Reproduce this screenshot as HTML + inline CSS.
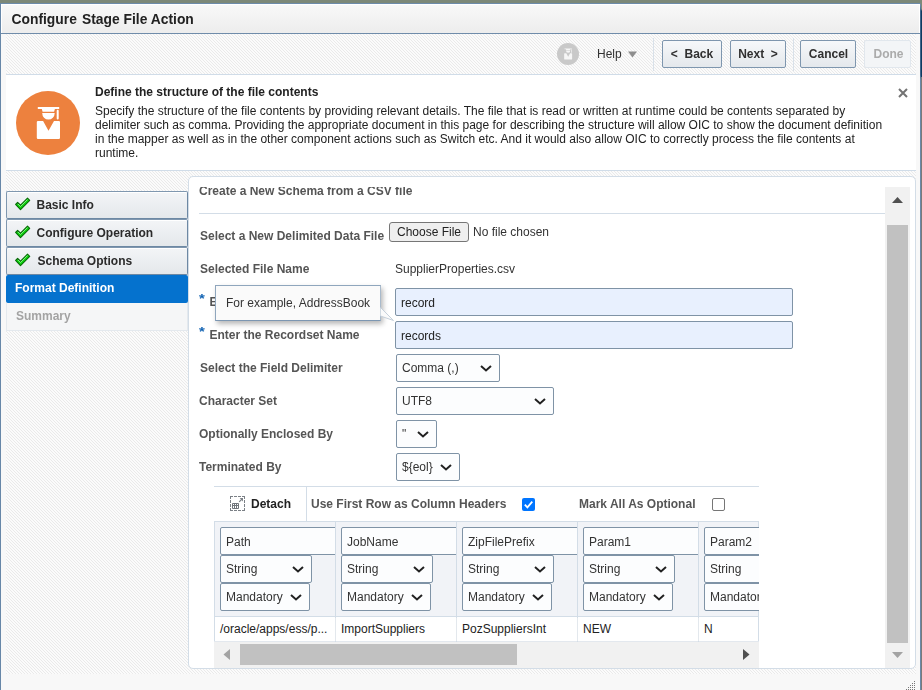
<!DOCTYPE html>
<html><head><meta charset="utf-8"><title>Configure Stage File Action</title>
<style>
*{box-sizing:border-box;margin:0;padding:0}
html,body{width:922px;height:690px;overflow:hidden;background:#f8f8f8;font-family:"Liberation Sans",Arial,sans-serif;font-size:12px;color:#333}
.abs{position:absolute}
#root{will-change:transform;position:absolute;left:0;top:0;width:922px;height:690px;overflow:hidden;background:#f8f8f8}
#topband{left:0;top:0;width:922px;height:3px;background:#7c8878}
#rightdark{left:921px;top:0;width:1px;height:77px;background:linear-gradient(#7c8878 0,#7c8878 9px,#0f3b60 11px,#0f3b60 100%)}
#rightgray{left:921px;top:77px;width:1px;height:613px;background:#7a7a7a}
#rightb{left:920px;top:3px;width:1px;height:687px;background:linear-gradient(#7c8878 0,#6a89aa 2px,#41668b 8px,#41668b 72px,#6a89aa 76px,#6a89aa 100%)}
#leftb{left:0;top:3px;width:1px;height:687px;background:#6787a8}
#topb{left:0;top:3px;width:921px;height:1px;background:#6c8baa}
#titlebar{left:1px;top:4px;width:919px;height:29px;background:linear-gradient(#f8f8f8,#ededed);border-top:1px solid #fff;border-left:1px solid #fff;border-right:1px solid #fff}
#titlebar span{position:absolute;left:9.5px;top:6px;font-size:13.850px;font-weight:bold;color:#222;white-space:nowrap;line-height:16px}
#titleline{left:1px;top:33px;width:919px;height:1px;background:#6f8caa}
#hatch{left:6px;top:34px;width:910px;height:640px}
.lbl{position:absolute;font-weight:bold;color:#555;white-space:nowrap;line-height:14px}
.txt{position:absolute;white-space:nowrap;line-height:14px;color:#333}
.btn{position:absolute;top:40px;height:28px;border:1px solid #7e96ae;border-radius:2px;background:linear-gradient(#f6f8fa,#e4e8ec);font-weight:bold;font-size:12px;color:#303030;text-align:center;line-height:26px;white-space:nowrap}
.nav{position:absolute;left:6px;width:182px;height:28px;border:1px solid #7f97af;border-right-color:#6d88a3;border-bottom-color:#6d88a3;border-radius:2px;background:linear-gradient(#f3f5f7,#e4e8eb);box-shadow:inset 0 1px 0 #fff;line-height:25px;white-space:nowrap;color:#222}
.sel{position:absolute;height:28px;border:1px solid #7f93a6;border-radius:2px;background:#fcfdfe;line-height:26px;padding-left:5px;white-space:nowrap;color:#333;overflow:hidden}
.inp{position:absolute;height:28px;border:1px solid #7f93a6;border-radius:2px;background:#e8f0fe;line-height:28px;padding-left:5px;white-space:nowrap;color:#222}
.chev{position:absolute;top:10px;width:12px;height:7px}
</style></head><body>
<div id="root">
<svg class="abs" id="hatch" width="910" height="640"><defs><pattern id="hp" width="3" height="3" patternUnits="userSpaceOnUse"><rect width="3" height="3" fill="#fbfbfb"/><path d="M0 0h1v1h-1zM1 1h1v1h-1zM2 2h1v1h-1z" fill="#eaeaea" shape-rendering="crispEdges"/></pattern></defs><rect width="910" height="640" fill="url(#hp)"/></svg>
<div class="abs" id="topband"></div>
<div class="abs" id="topb"></div>
<div class="abs" id="leftb"></div>
<div class="abs" id="rightdark"></div><div class="abs" id="rightgray"></div><div class="abs" id="rightb"></div>
<div class="abs" id="titlebar"><span>Configure<i style="display:inline-block;width:1.300px"></i> Stage File Action</span></div>
<div class="abs" id="titleline"></div>

<!-- toolbar -->
<div class="abs" style="left:653px;top:38px;width:1px;height:33px;background:#d9e1e9"></div>
<div class="abs" style="left:793px;top:38px;width:1px;height:33px;background:#d9e1e9"></div>
<svg class="abs" style="left:557px;top:43px" width="22" height="22" viewBox="0 0 22 22"><circle cx="11" cy="11" r="11" fill="#c9c9c9"/><g transform="scale(0.34375)"><path d="M21.800 15.900h21.400v2h-21.400zM25.800 17.900h13.100l-.8 2.800h-11.500zM26.200 22h12.500a6.250 6.600 0 0 1-12.500 0zM40.700 19.800a1 1 0 0 1 2 0v7.800a1 1 0 0 1-2 0zM22 29.900h5.100l5.400 9.800 5.500-9.800h4.800a1.200 1.200 0 0 1 1.200 1.200v15.700a1.200 1.200 0 0 1-1.200 1.200h-20.800a1.200 1.200 0 0 1-1.200-1.200v-15.700a1.200 1.200 0 0 1 1.200-1.200z" fill="#f6f6f6"/></g></svg>
<div class="txt" style="left:597px;top:47px;color:#333">Help</div>
<svg class="abs" style="left:628px;top:51px" width="9" height="7"><path d="M0 .5h9l-4.500 6z" fill="#8e8e8e"/></svg>
<div class="btn" style="left:662px;width:60px">&lt;&nbsp; Back</div>
<div class="btn" style="left:730px;width:56px">Next &nbsp;&gt;</div>
<div class="btn" style="left:800px;width:56px;padding-left:1px">Cancel</div>
<div class="btn" style="left:864px;width:47px;border-color:#e1e7ed;background:#f3f5f7;color:#ababab;padding-left:2px">Done</div>

<!-- info panel -->
<div class="abs" style="left:6px;top:74px;width:910px;height:97px;background:#fff;border-top:1px solid #d0dce8;border-bottom:1px solid #d0dce8"></div>
<svg class="abs" style="left:16px;top:91px" width="64" height="64" viewBox="0 0 64 64"><circle cx="32" cy="32" r="32" fill="#ed813e"/><path d="M21.800 15.900h21.400v2h-21.400zM25.800 17.900h13.100l-.8 2.800h-11.500zM26.200 22h12.500a6.250 6.600 0 0 1-12.500 0zM40.700 19.800a1 1 0 0 1 2 0v7.800a1 1 0 0 1-2 0zM22 29.900h5.100l5.400 9.800 5.500-9.800h4.800a1.200 1.200 0 0 1 1.200 1.200v15.700a1.200 1.200 0 0 1-1.200 1.200h-20.800a1.200 1.200 0 0 1-1.200-1.200v-15.700a1.200 1.200 0 0 1 1.200-1.200z" fill="#fff"/></svg>
<div class="lbl" style="left:95px;top:85px;color:#222">Define the structure of the file contents</div>
<div class="txt" style="left:95px;top:104px;white-space:normal;width:800px;color:#222">Specify the structure of the file contents by providing relevant details. The file that is read or written at runtime could be contents separated by<br>delimiter such as comma. Providing the appropriate document in this page for describing the structure will allow OIC to show the document definition<br>in the mapper as well as in the other component actions such as Switch etc. And it would also allow OIC to correctly process the file contents at<br>runtime.</div>
<svg class="abs" style="left:898px;top:88px" width="10" height="10" viewBox="0 0 10 10"><path d="M1 1l8 8M9 1l-8 8" stroke="#737373" stroke-width="2" fill="none"/></svg>

<!-- nav -->
<div class="nav" style="top:191px"><svg class="abs ck" style="left:7px;top:5px" width="17" height="14" viewBox="-1 -1 17 14"><path d="M.6 6.300l2-2 2.900 2.900 7-7 2.200 2.200-9.200 9.300z" fill="#0fd60f" stroke="#056b05" stroke-width="1.100" stroke-linejoin="round"/><path d="M2.700 5.700l2.800 2.800 7-7" stroke="#c8ffc8" stroke-width=".8" fill="none" opacity=".75"/></svg><span class="abs" style="left:29.500px;top:1px;font-weight:bold;color:#2b2b2b">Basic Info</span></div>
<div class="nav" style="top:219px"><svg class="abs ck" style="left:7px;top:5px" width="17" height="14" viewBox="-1 -1 17 14"><path d="M.6 6.300l2-2 2.900 2.900 7-7 2.200 2.200-9.200 9.300z" fill="#0fd60f" stroke="#056b05" stroke-width="1.100" stroke-linejoin="round"/><path d="M2.700 5.700l2.800 2.800 7-7" stroke="#c8ffc8" stroke-width=".8" fill="none" opacity=".75"/></svg><span class="abs" style="left:29.500px;top:1px;font-weight:bold;color:#2b2b2b">Configure Operation</span></div>
<div class="nav" style="top:247px"><svg class="abs ck" style="left:7px;top:5px" width="17" height="14" viewBox="-1 -1 17 14"><path d="M.6 6.300l2-2 2.900 2.900 7-7 2.200 2.200-9.200 9.300z" fill="#0fd60f" stroke="#056b05" stroke-width="1.100" stroke-linejoin="round"/><path d="M2.700 5.700l2.800 2.800 7-7" stroke="#c8ffc8" stroke-width=".8" fill="none" opacity=".75"/></svg><span class="abs" style="left:30.500px;top:1px;font-weight:bold;color:#2b2b2b">Schema Options</span></div>
<div class="abs" style="left:6px;top:275px;width:182px;height:28px;background:#0572ce;border-radius:2px;color:#fff;font-weight:bold;line-height:26px;padding-left:9px;white-space:nowrap">Format Definition</div>
<div class="abs" style="left:6px;top:303px;width:182px;height:28px;background:#f5f6f7;border:1px solid #e4e9ee;border-top:none;color:#a3a3a3;font-weight:bold;line-height:26px;padding-left:9px;white-space:nowrap">Summary</div>

<!-- main panel -->
<div class="abs" id="main" style="left:188px;top:176px;width:728px;height:493px;background:#fff;border:1px solid #d3dde7;border-radius:5px"></div>
<div class="abs" style="left:199px;top:187px;width:687px;height:14px;overflow:hidden"><div class="lbl" style="left:0;top:-3px">Create a New Schema from a CSV file</div></div>
<div class="abs" style="left:199px;top:213px;width:687px;height:1px;background:#d3dde7"></div>

<div class="lbl" style="left:200px;top:229px">Select a New Delimited Data File</div>
<div class="abs" style="left:389px;top:222px;width:80px;height:20px;border:1px solid #767676;border-radius:3px;background:#efefef;color:#222;text-align:center;line-height:18px;white-space:nowrap">Choose File</div>
<div class="txt" style="left:473px;top:225px;color:#333">No file chosen</div>
<div class="lbl" style="left:200px;top:262px">Selected File Name</div>
<div class="txt" style="left:395px;top:262px">SupplierProperties.csv</div>

<div class="txt" style="left:199px;top:293px;color:#1263b3;font-size:13px;font-weight:bold;transform:scale(1.15,.95);transform-origin:0 0">*</div>
<div class="lbl" style="left:209.500px;top:295px">Enter the Record Name</div>
<div class="inp" style="left:395px;top:288px;width:398px">record</div>
<div class="txt" style="left:199px;top:326px;color:#1263b3;font-size:13px;font-weight:bold;transform:scale(1.15,.95);transform-origin:0 0">*</div>
<div class="lbl" style="left:209.500px;top:328px">Enter the Recordset Name</div>
<div class="inp" style="left:395px;top:321px;width:398px">records</div>

<!-- tooltip -->
<svg class="abs" style="left:378px;top:305px;z-index:3" width="18" height="18" viewBox="0 0 18 18"><path d="M2.500 2.500l13 13-13-4.500z" fill="#fafafa"/><path d="M2.500 2.500l13 13-13-4.500" fill="none" stroke="#c5d0db" stroke-width="1"/></svg>
<div class="abs" style="left:215px;top:285px;width:166px;height:36px;background:#fafafa;border:1px solid #8fa6bd;border-right-color:#a9bacb;border-bottom-color:#7d97b2;box-shadow:2px 3px 5px rgba(0,0,0,.28);line-height:34px;padding-left:10px;white-space:nowrap;color:#333">For example, AddressBook</div>

<div class="lbl" style="left:200px;top:361px">Select the Field Delimiter</div>
<div class="sel" style="left:396px;top:354px;width:104px">Comma (,)<svg class="chev" style="left:82.500px" viewBox="0 0 12 7"><path d="M1 1l5 4.500 5-4.500" stroke="#222" stroke-width="2" fill="none"/></svg></div>
<div class="lbl" style="left:199px;top:394px">Character Set</div>
<div class="sel" style="left:396px;top:387px;width:158px">UTF8<svg class="chev" style="left:136.500px" viewBox="0 0 12 7"><path d="M1 1l5 4.500 5-4.500" stroke="#222" stroke-width="2" fill="none"/></svg></div>
<div class="lbl" style="left:199px;top:427px">Optionally Enclosed By</div>
<div class="sel" style="left:396px;top:420px;width:41px">"<svg class="chev" style="left:19.500px" viewBox="0 0 12 7"><path d="M1 1l5 4.500 5-4.500" stroke="#222" stroke-width="2" fill="none"/></svg></div>
<div class="lbl" style="left:199px;top:460px">Terminated By</div>
<div class="sel" style="left:396px;top:453px;width:64px">${eol}<svg class="chev" style="left:42.500px" viewBox="0 0 12 7"><path d="M1 1l5 4.500 5-4.500" stroke="#222" stroke-width="2" fill="none"/></svg></div>

<!-- table toolbar -->
<div class="abs" id="tblwrap" style="left:214px;top:486px;width:545px;height:182px;overflow:hidden">
 <div class="abs" style="left:0;top:0;width:545px;height:1px;background:#d3dde7"></div>
 <div class="abs" style="left:92px;top:0;width:1px;height:35px;background:#d3dde7"></div>
 <svg class="abs" style="left:16px;top:10px" width="15" height="15" viewBox="0 0 15 15"><path d="M0 .5h15M0 14.500h15M.5 0v15M14.500 0v15" stroke="#7b8086" stroke-dasharray="3 1" fill="none"/><path d="M2.500 7.500h6v5h-6zM2.500 9.500h6M4.500 7.500v5M6.500 7.500v5" stroke="#70757b" fill="none"/><path d="M9.200 5.800l3-3" stroke="#7b8086" stroke-width="1.200" fill="none"/><path d="M9.700 2.100h3.300v3.300z" fill="#7b8086"/></svg>
 <div class="lbl" style="left:37px;top:11px;color:#222">Detach</div>
 <div class="lbl" style="left:97px;top:11px">Use First Row as Column Headers</div>
 <svg class="abs" style="left:308px;top:12px" width="13" height="13" viewBox="0 0 13 13"><rect width="13" height="13" rx="2" fill="#0075ff"/><path d="M2.800 6.600l2.600 2.700 4.900-5.600" stroke="#fff" stroke-width="1.800" fill="none"/></svg>
 <div class="lbl" style="left:365px;top:11px">Mark All As Optional</div>
 <div class="abs" style="left:498px;top:12px;width:13px;height:13px;border:1px solid #767676;border-radius:2px;background:#fff"></div>
 <!-- table -->
 <div class="abs" style="left:0;top:35px;width:545px;height:96px;background:#f1f3f7;border-top:1px solid #d3dde7;border-bottom:1px solid #d3dde7"></div>
 <div class="abs" style="left:0;top:35px;width:1px;height:147px;background:#d3dde7"></div>
 <div class="abs" style="left:544px;top:35px;width:1px;height:147px;background:#d3dde7"></div>
 <div class="abs" style="left:0;top:155px;width:545px;height:1px;background:#e3e8ee"></div>
 <div class="abs" style="left:0;top:156px;width:545px;height:26px;background:#f1f1f1"></div>
 <div class="abs" style="left:26px;top:158px;width:277px;height:21px;background:#c1c1c1"></div>
 <svg class="abs" style="left:9px;top:163px" width="8" height="12"><path d="M7 0v11l-6.500-5.500z" fill="#a3a3a3"/></svg>
 <svg class="abs" style="left:528px;top:163px" width="8" height="12"><path d="M1 0v11l6.500-5.500z" fill="#505050"/></svg>
 <div class="abs" style="left:1px;top:41px;width:120px;height:28px;overflow:hidden"><div class="sel" style="left:5px;top:0;width:130px;line-height:28px;padding-left:5px">Path</div></div>
 <div class="sel" style="left:6px;top:69px;width:92px">String<svg class="chev" style="left:71px" viewBox="0 0 12 7"><path d="M1 1l5 4.500 5-4.500" stroke="#222" stroke-width="2" fill="none"/></svg></div>
 <div class="sel" style="left:6px;top:97px;width:90px">Mandatory<svg class="chev" style="left:69px" viewBox="0 0 12 7"><path d="M1 1l5 4.500 5-4.500" stroke="#222" stroke-width="2" fill="none"/></svg></div>
 <div class="abs" style="left:121px;top:35px;width:1px;height:121px;background:#d3dde7"></div>
 <div class="abs" style="left:122px;top:41px;width:120px;height:28px;overflow:hidden"><div class="sel" style="left:5px;top:0;width:130px;line-height:28px;padding-left:5px">JobName</div></div>
 <div class="sel" style="left:127px;top:69px;width:92px">String<svg class="chev" style="left:71px" viewBox="0 0 12 7"><path d="M1 1l5 4.500 5-4.500" stroke="#222" stroke-width="2" fill="none"/></svg></div>
 <div class="sel" style="left:127px;top:97px;width:90px">Mandatory<svg class="chev" style="left:69px" viewBox="0 0 12 7"><path d="M1 1l5 4.500 5-4.500" stroke="#222" stroke-width="2" fill="none"/></svg></div>
 <div class="abs" style="left:242px;top:35px;width:1px;height:121px;background:#d3dde7"></div>
 <div class="abs" style="left:243px;top:41px;width:120px;height:28px;overflow:hidden"><div class="sel" style="left:5px;top:0;width:130px;line-height:28px;padding-left:5px">ZipFilePrefix</div></div>
 <div class="sel" style="left:248px;top:69px;width:92px">String<svg class="chev" style="left:71px" viewBox="0 0 12 7"><path d="M1 1l5 4.500 5-4.500" stroke="#222" stroke-width="2" fill="none"/></svg></div>
 <div class="sel" style="left:248px;top:97px;width:90px">Mandatory<svg class="chev" style="left:69px" viewBox="0 0 12 7"><path d="M1 1l5 4.500 5-4.500" stroke="#222" stroke-width="2" fill="none"/></svg></div>
 <div class="abs" style="left:363px;top:35px;width:1px;height:121px;background:#d3dde7"></div>
 <div class="abs" style="left:364px;top:41px;width:120px;height:28px;overflow:hidden"><div class="sel" style="left:5px;top:0;width:130px;line-height:28px;padding-left:5px">Param1</div></div>
 <div class="sel" style="left:369px;top:69px;width:92px">String<svg class="chev" style="left:71px" viewBox="0 0 12 7"><path d="M1 1l5 4.500 5-4.500" stroke="#222" stroke-width="2" fill="none"/></svg></div>
 <div class="sel" style="left:369px;top:97px;width:90px">Mandatory<svg class="chev" style="left:69px" viewBox="0 0 12 7"><path d="M1 1l5 4.500 5-4.500" stroke="#222" stroke-width="2" fill="none"/></svg></div>
 <div class="abs" style="left:484px;top:35px;width:1px;height:121px;background:#d3dde7"></div>
 <div class="abs" style="left:485px;top:41px;width:120px;height:28px;overflow:hidden"><div class="sel" style="left:5px;top:0;width:130px;line-height:28px;padding-left:5px">Param2</div></div>
 <div class="sel" style="left:490px;top:69px;width:92px">String<svg class="chev" style="left:71px" viewBox="0 0 12 7"><path d="M1 1l5 4.500 5-4.500" stroke="#222" stroke-width="2" fill="none"/></svg></div>
 <div class="sel" style="left:490px;top:97px;width:90px">Mandatory<svg class="chev" style="left:69px" viewBox="0 0 12 7"><path d="M1 1l5 4.500 5-4.500" stroke="#222" stroke-width="2" fill="none"/></svg></div>
</div>

<!-- v scrollbar -->
<div class="abs" style="left:885px;top:187px;width:25px;height:481px;background:#f1f1f1"></div>
<div class="abs" style="left:887px;top:225px;width:21px;height:418px;background:#c1c1c1"></div>
<svg class="abs" style="left:892px;top:197px" width="11" height="6"><path d="M0 6h11l-5.500-6z" fill="#505050"/></svg>
<svg class="abs" style="left:892px;top:652px" width="11" height="6"><path d="M0 0h11l-5.500 6z" fill="#a3a3a3"/></svg>

<!-- footer -->
<div class="abs" style="left:1px;top:674px;width:919px;height:16px;background:#f8f8f8"></div>
<svg class="abs" style="left:904px;top:680px" width="12" height="11" shape-rendering="crispEdges"><g fill="#777"><rect x="10" y="1" width="1" height="1"/><rect x="8" y="3" width="1" height="1"/><rect x="10" y="3" width="1" height="1"/><rect x="6" y="5" width="1" height="1"/><rect x="8" y="5" width="1" height="1"/><rect x="10" y="5" width="1" height="1"/><rect x="4" y="7" width="1" height="1"/><rect x="6" y="7" width="1" height="1"/><rect x="8" y="7" width="1" height="1"/><rect x="10" y="7" width="1" height="1"/><rect x="2" y="9" width="1" height="1"/><rect x="4" y="9" width="1" height="1"/><rect x="6" y="9" width="1" height="1"/><rect x="8" y="9" width="1" height="1"/><rect x="10" y="9" width="1" height="1"/></g></svg>
</div>
<div id="datarow" style="position:absolute;left:215px;top:618px;width:543px;height:23px;background:#fff;overflow:hidden"><div class="txt" style="left:5px;top:4px;color:#222">/oracle/apps/ess/p...</div><div class="txt" style="left:126px;top:4px;color:#222">ImportSuppliers</div><div class="abs" style="left:120px;top:0;width:1px;height:23px;background:#e3e8ed"></div><div class="txt" style="left:247px;top:4px;color:#222">PozSuppliersInt</div><div class="abs" style="left:241px;top:0;width:1px;height:23px;background:#e3e8ed"></div><div class="txt" style="left:368px;top:4px;color:#222">NEW</div><div class="abs" style="left:362px;top:0;width:1px;height:23px;background:#e3e8ed"></div><div class="txt" style="left:489px;top:4px;color:#222">N</div><div class="abs" style="left:483px;top:0;width:1px;height:23px;background:#e3e8ed"></div></div>
</body></html>
